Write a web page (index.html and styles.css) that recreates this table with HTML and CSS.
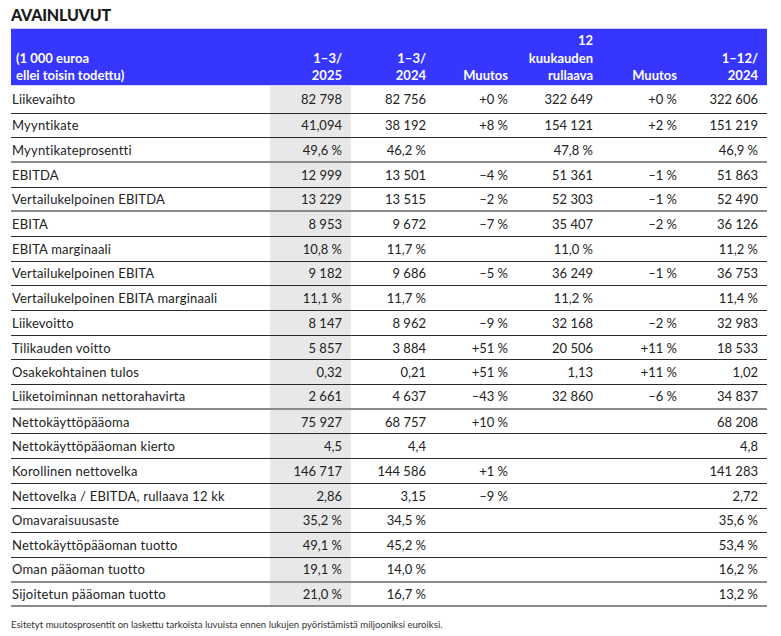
FILE: index.html
```html
<!DOCTYPE html>
<html lang="fi">
<head>
<meta charset="utf-8">
<title>Avainluvut</title>
<link rel="stylesheet" href="styles.css">
</head>
<body>
<main class="page">
  <h1 class="title">AVAINLUVUT</h1>
  <table class="kpi">
    <colgroup>
      <col class="c-label"><col class="c-a"><col class="c-b"><col class="c-c"><col class="c-d"><col class="c-e"><col class="c-f">
    </colgroup>
    <thead>
      <tr>
        <th class="lbl">(1 000 euroa<br>ellei toisin todettu)</th>
        <th>1–3/<br>2025</th>
        <th>1–3/<br>2024</th>
        <th>Muutos</th>
        <th>12<br>kuukauden<br>rullaava</th>
        <th>Muutos</th>
        <th>1–12/<br>2024</th>
      </tr>
    </thead>
    <tbody>
      <tr class="first"><td>Liikevaihto</td><td class="hl">82 798</td><td>82 756</td><td>+0 %</td><td>322 649</td><td>+0 %</td><td>322 606</td></tr>
      <tr><td>Myyntikate</td><td class="hl">41,094</td><td>38 192</td><td>+8 %</td><td>154 121</td><td>+2 %</td><td>151 219</td></tr>
      <tr class="soft"><td>Myyntikateprosentti</td><td class="hl">49,6 %</td><td>46,2 %</td><td></td><td>47,8 %</td><td></td><td>46,9 %</td></tr>
      <tr><td>EBITDA</td><td class="hl">12 999</td><td>13 501</td><td>–4 %</td><td>51 361</td><td>–1 %</td><td>51 863</td></tr>
      <tr class="soft"><td>Vertailukelpoinen EBITDA</td><td class="hl">13 229</td><td>13 515</td><td>–2 %</td><td>52 303</td><td>–1 %</td><td>52 490</td></tr>
      <tr><td>EBITA</td><td class="hl">8 953</td><td>9 672</td><td>–7 %</td><td>35 407</td><td>–2 %</td><td>36 126</td></tr>
      <tr><td>EBITA marginaali</td><td class="hl">10,8 %</td><td>11,7 %</td><td></td><td>11,0 %</td><td></td><td>11,2 %</td></tr>
      <tr><td>Vertailukelpoinen EBITA</td><td class="hl">9 182</td><td>9 686</td><td>–5 %</td><td>36 249</td><td>–1 %</td><td>36 753</td></tr>
      <tr><td>Vertailukelpoinen EBITA marginaali</td><td class="hl">11,1 %</td><td>11,7 %</td><td></td><td>11,2 %</td><td></td><td>11,4 %</td></tr>
      <tr><td>Liikevoitto</td><td class="hl">8 147</td><td>8 962</td><td>–9 %</td><td>32 168</td><td>–2 %</td><td>32 983</td></tr>
      <tr><td>Tilikauden voitto</td><td class="hl">5 857</td><td>3 884</td><td>+51 %</td><td>20 506</td><td>+11 %</td><td>18 533</td></tr>
      <tr><td>Osakekohtainen tulos</td><td class="hl">0,32</td><td>0,21</td><td>+51 %</td><td>1,13</td><td>+11 %</td><td>1,02</td></tr>
      <tr class="soft"><td>Liiketoiminnan nettorahavirta</td><td class="hl">2 661</td><td>4 637</td><td>–43 %</td><td>32 860</td><td>–6 %</td><td>34 837</td></tr>
      <tr><td>Nettokäyttöpääoma</td><td class="hl">75 927</td><td>68 757</td><td>+10 %</td><td></td><td></td><td>68 208</td></tr>
      <tr><td>Nettokäyttöpääoman kierto</td><td class="hl">4,5</td><td>4,4</td><td></td><td></td><td></td><td>4,8</td></tr>
      <tr><td>Korollinen nettovelka</td><td class="hl">146 717</td><td>144 586</td><td>+1 %</td><td></td><td></td><td>141 283</td></tr>
      <tr><td>Nettovelka / EBITDA, rullaava 12 kk</td><td class="hl">2,86</td><td>3,15</td><td>–9 %</td><td></td><td></td><td>2,72</td></tr>
      <tr><td>Omavaraisuusaste</td><td class="hl">35,2 %</td><td>34,5 %</td><td></td><td></td><td></td><td>35,6 %</td></tr>
      <tr><td>Nettokäyttöpääoman tuotto</td><td class="hl">49,1 %</td><td>45,2 %</td><td></td><td></td><td></td><td>53,4 %</td></tr>
      <tr class="soft"><td>Oman pääoman tuotto</td><td class="hl">19,1 %</td><td>14,0 %</td><td></td><td></td><td></td><td>16,2 %</td></tr>
      <tr class="soft"><td>Sijoitetun pääoman tuotto</td><td class="hl">21,0 %</td><td>16,7 %</td><td></td><td></td><td></td><td>13,2 %</td></tr>
    </tbody>
  </table>
  <p class="note">Esitetyt muutosprosentit on laskettu tarkoista luvuista ennen lukujen pyöristämistä miljooniksi euroiksi.</p>
</main>
</body>
</html>
```

FILE: styles.css
```css
html, body {
  margin: 0;
  padding: 0;
  background: #ffffff;
}

.page {
  padding: 6px 14px 0 11px;
  font-family: Lato, "Noto Sans", sans-serif;
  color: #222222;
}

.title {
  margin: 0 0 4px 0;
  font-size: 16px;
  line-height: 18px;
  font-weight: 900;
  color: #1a1a1a;
  letter-spacing: -0.2px;
}

.kpi {
  border-collapse: collapse;
  table-layout: fixed;
  width: 756px;
  font-size: 13px;
}

.c-label { width: 259px; }
.c-a { width: 81px; }
.c-b { width: 84px; }
.c-c { width: 82px; }
.c-d { width: 85px; }
.c-e { width: 84px; }
.c-f { width: 81px; }

.kpi thead th {
  background: #3636ff;
  color: #ffffff;
  font-weight: 700;
  line-height: 17.5px;
  padding: 3px 9px 0 0;
  text-align: right;
  vertical-align: bottom;
  border-top: 1px solid #c9c9f5;
  border-bottom: 1px solid #d6d6ff;
}

.kpi thead th.lbl {
  text-align: left;
  padding-left: 5px;
}

.kpi tbody td {
  height: 23.7px;
  padding: 0 9px 0 0;
  text-align: right;
  white-space: nowrap;
  border-bottom: 1px solid #2a2a2a;
  line-height: 16px;
}

.kpi tbody td:first-child {
  text-align: left;
  padding-left: 1px;
  letter-spacing: 0.2px;
}

.kpi tbody tr.first td {
  height: 27px;
}

.kpi tbody tr.soft td {
  height: 22.7px;
  border-bottom: 2px solid #8a8a8a;
}

.kpi tbody td.hl {
  background: #e8e8e8;
}

.note {
  margin: 12px 0 0 0;
  font-size: 9.6px;
  color: #333333;
}
```
